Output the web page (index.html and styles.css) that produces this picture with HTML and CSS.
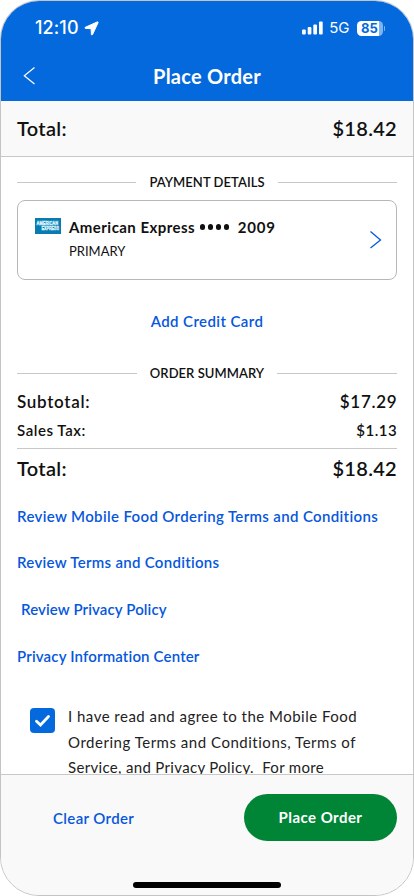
FILE: index.html
```html
<!DOCTYPE html>
<html lang="en">
<head>
<meta charset="utf-8">
<title>Place Order</title>
<link rel="stylesheet" href="styles.css">
</head>
<body>
<div class="phone">
  <header class="header">
    <div class="status">
      <span class="time">12:10</span>
      <svg class="location" width="15" height="15" viewBox="0 0 15 15"><path d="M13.300.9 1.300 6.300c-.6.3-.5 1 .1 1.100l5.700.3.3 5.800c.1.6.8.7 1.100.1L14.100 1.600c.2-.5-.3-.9-.8-.7z" fill="#fff" stroke="#fff" stroke-width="1"/></svg>
      <span class="spacer"></span>
      <svg class="signal" width="21" height="14" viewBox="0 0 21 14" fill="#fff"><rect x="0" y="8.500" width="3.800" height="5" rx="1"/><rect x="5.700" y="6" width="3.700" height="7.500" rx="1"/><rect x="11.300" y="3.500" width="3.700" height="10" rx="1"/><rect x="17" y=".5" width="3.700" height="13" rx="1"/></svg>
      <span class="network">5G</span>
      <span class="battery">85</span>
      <span class="battery-cap"></span>
    </div>
    <div class="nav">
      <svg class="back" width="14" height="20" viewBox="0 0 14 20"><path d="M12.500 1.500 2.300 9.800 12.500 18" fill="none" stroke="#fff" stroke-width="1.200"/></svg>
      <h1 class="title">Place Order</h1>
    </div>
  </header>
  <div class="total-bar"><span class="total-label">Total:</span><span class="total-value">$18.42</span></div>
  <main class="content">
    <h2 class="section payment-title"><span>PAYMENT DETAILS</span></h2>
    <div class="card">
      <svg class="amex" width="26" height="16" viewBox="0 0 26 16"><rect width="26" height="16" fill="#087bb0"/><g font-family="Liberation Sans, sans-serif" font-size="5" font-weight="700" fill="#3c9cc6" stroke="#d9f1fb" stroke-width=".55"><text x="1.600" y="7.400" textLength="21.500" lengthAdjust="spacingAndGlyphs">AMERICAN</text><text x="6.500" y="12" textLength="17.500" lengthAdjust="spacingAndGlyphs">EXPRESS</text></g></svg>
      <div class="card-text">
        <div class="card-line"><span class="card-name">American Express</span><span class="dots"><i></i><i></i><i></i><i></i></span><span class="card-number">2009</span></div>
        <div class="primary">PRIMARY</div>
      </div>
      <svg class="chevron" width="13" height="20" viewBox="0 0 13 20"><path d="M1.500 1.500 11.500 10 1.500 18" fill="none" stroke="#0657e4" stroke-width="1.300"/></svg>
    </div>
    <a class="add-card">Add Credit Card</a>
    <h2 class="section summary-title"><span>ORDER SUMMARY</span></h2>
    <div class="row subtotal"><span class="sub-label">Subtotal:</span><span class="sub-value">$17.29</span></div>
    <div class="row tax"><span class="tax-label">Sales Tax:</span><span class="tax-value">$1.13</span></div>
    <div class="row grand"><span class="total-label">Total:</span><span class="total-value">$18.42</span></div>
    <nav class="links">
      <a class="l1">Review Mobile Food Ordering Terms and Conditions</a>
      <a class="l2">Review Terms and Conditions</a>
      <a class="l3">Review Privacy Policy</a>
      <a class="l4">Privacy Information Center</a>
    </nav>
    <div class="agree">
      <span class="check"><svg width="25" height="25" viewBox="0 0 25 25"><path d="M6.500 13.200 10.500 17 18.500 8.500" fill="none" stroke="#fff" stroke-width="2.800" stroke-linecap="round"/></svg></span>
      <p class="terms"><span class="t1">I have read and agree to the Mobile Food</span><span class="t2">Ordering Terms and Conditions, Terms of</span><span class="t3">Service, and Privacy Policy.&nbsp; For more</span></p>
    </div>
  </main>
  <footer class="footer">
    <div class="actions"><a class="clear">Clear Order</a><button class="place">Place Order</button></div>
    <div class="home"></div>
  </footer>
</div>
</body>
</html>
```
FILE: styles.css
```css
* { box-sizing: border-box; }
body { margin: 0; background: #fff; font-family: Lato, "Liberation Sans", sans-serif; color: #111; font-variant-ligatures: none; }
.phone { width: 414px; height: 896px; border: 1px solid #c4c4c4; border-radius: 39px; overflow: hidden; display: flex; flex-direction: column; background: #fff; }
.header { height: 100px; background: #0469dd; color: #fff; flex: none; }
.status { height: 54px; padding: 0 28px 0 34px; display: flex; align-items: center; }
.time { font: 500 18px/24px Inter, sans-serif; letter-spacing: .1px; }
.location { margin-left: 5px; }
.spacer { flex: 1; }
.network { font: 400 15px/20px Inter, sans-serif; margin: 0 7px 0 6px; }
.battery { width: 26px; height: 15px; border-radius: 4.500px; background: linear-gradient(90deg, #fff 86%, #80b4ee 86%); color: #0469dd; font: 700 13px/15px Inter, sans-serif; text-align: center; }
.battery-cap { width: 1.500px; height: 5px; margin-left: 1px; border-radius: 0 2px 2px 0; background: #80b4ee; }
.nav { height: 42px; display: grid; grid-template-columns: 60px 1fr 60px; align-items: center; }
.back { margin-left: 20.500px; }
.title { margin: 0; text-align: center; font-size: 20px; line-height: 26px; font-weight: 700; letter-spacing: .25px; }
.total-bar { height: 56px; flex: none; background: #f9f9f9; border-bottom: 1px solid #c8c8c8; padding: 0 16px 1px; display: flex; align-items: center; justify-content: space-between; }
.total-label, .total-value { font-size: 20px; line-height: 26px; font-weight: 600; letter-spacing: .3px; }
.content { flex: 1; min-height: 0; overflow: hidden; padding: 0 16px; }
.section { display: flex; align-items: center; gap: 13px; margin: 0; font-size: 13px; line-height: 20px; font-weight: 600; letter-spacing: .05px; }
.section::before, .section::after { content: ""; height: 1px; flex: 1; background: #c8c8c8; }
.payment-title { padding-top: 15px; }
.card { height: 80px; margin-top: 8px; border: 1px solid #b7b7b7; border-radius: 8px; display: flex; padding: 15px 14px 0 17px; }
.amex { margin-top: 2px; flex: none; overflow: visible; }
.card-text { flex: 1; margin-left: 8px; }
.card-line { display: flex; align-items: center; height: 22px; font-size: 15px; font-weight: 700; letter-spacing: .45px; }
.dots { display: flex; gap: 2.700px; margin-left: 4.800px; }
.dots i { width: 5.200px; height: 5.200px; border-radius: 50%; background: #111; }
.card-number { margin-left: 9px; letter-spacing: .8px; }
.primary { font-size: 13px; line-height: 20px; margin-top: 3px; }
.chevron { margin-top: 14px; }
.add-card { display: block; text-align: center; margin-top: 30px; font-size: 15px; line-height: 22px; font-weight: 600; letter-spacing: .4px; color: #0657dc; }
.summary-title { margin-top: 31px; }
.row { display: flex; justify-content: space-between; align-items: center; }
.subtotal { height: 30px; margin-top: 3px; font-size: 17px; font-weight: 600; letter-spacing: .7px; }
.sub-value, .tax-value { margin-right: -.3px; }
.tax { height: 33px; padding-bottom: 5px; font-size: 15px; font-weight: 600; letter-spacing: .55px; border-bottom: 1px solid #c8c8c8; }
.grand { height: 39px; padding-bottom: 1px; }
.links { display: flex; flex-direction: column; gap: 24.800px; margin-top: 16.500px; color: #0657dc; font-size: 15px; line-height: 22px; font-weight: 600; }
.links a { white-space: pre; }
.l1 { letter-spacing: .35px; }
.l2 { letter-spacing: .3px; }
.l3 { margin-left: 4px; letter-spacing: .12px; }
.l4 { letter-spacing: .16px; }
.agree { display: flex; margin: 37.500px 0 0 13px; }
.check { width: 25px; height: 25px; margin-top: 3.400px; border-radius: 4px; background: #0469dd; display: flex; flex: none; }
.terms { margin: 0 0 0 13px; font-size: 15px; line-height: 25.400px; color: #222; white-space: nowrap; }
.terms span { display: block; }
.t1 { letter-spacing: .48px; }
.t2 { letter-spacing: .52px; }
.t3 { letter-spacing: .33px; }
.footer { height: 121px; flex: none; border-top: 1px solid #c8c8c8; background: #f9f9f9; }
.actions { height: 107px; padding: 19px 16px 0 52px; display: flex; justify-content: space-between; }
.clear { font-size: 15px; line-height: 48px; font-weight: 600; letter-spacing: .36px; color: #0657dc; }
.place { width: 153px; height: 47px; border: 0; border-radius: 24px; background: #008536; color: #fff; font: 700 15px/47px Lato, sans-serif; letter-spacing: .45px; padding: 0; }
.home { width: 148px; height: 6px; border-radius: 3px; background: #000; margin: 0 auto; }
```
